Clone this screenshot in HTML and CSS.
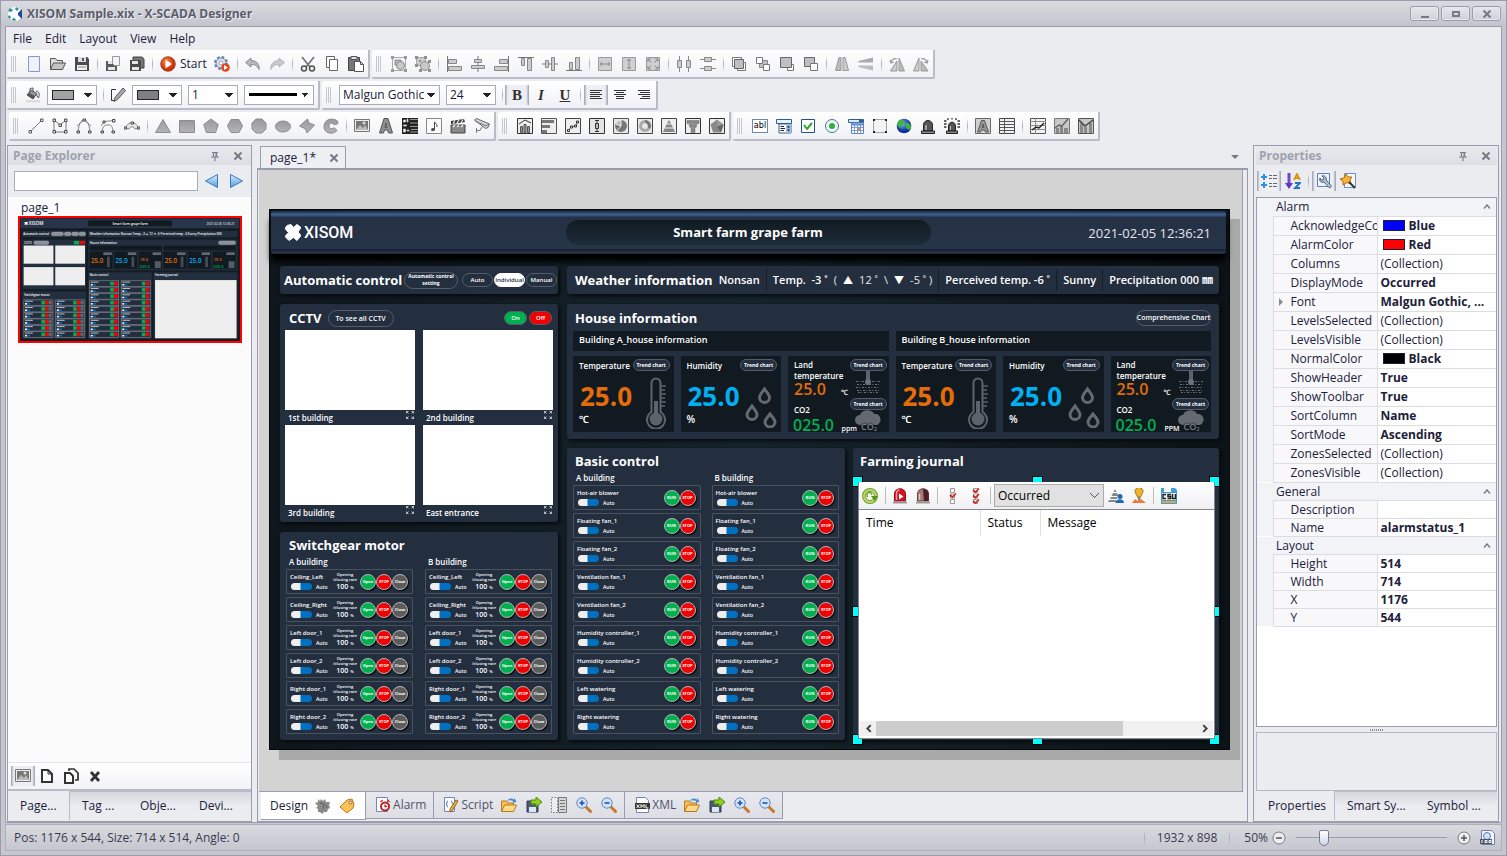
FILE: index.html
```html
<!DOCTYPE html>
<html lang="en">
<head>
<meta charset="utf-8">
<title>XISOM Sample.xix - X-SCADA Designer</title>
<link rel="stylesheet" href="styles.css">
</head>
<body>
<svg class="sprite" aria-hidden="true">
  <defs>
    <linearGradient id="gGrey" x1="0" y1="0" x2="0" y2="1"><stop offset="0" stop-color="#9a9a9d"/><stop offset="1" stop-color="#b4b4b7"/></linearGradient>
    <linearGradient id="gBlue" x1="0" y1="0" x2="0" y2="1"><stop offset="0" stop-color="#d8efff"/><stop offset="1" stop-color="#4f9fe0"/></linearGradient>
    <radialGradient id="gGlobe" cx=".4" cy=".35"><stop offset="0" stop-color="#7db4f5"/><stop offset="1" stop-color="#0b2f9c"/></radialGradient>
    <radialGradient id="gStart" cx=".4" cy=".35"><stop offset="0" stop-color="#ff8a50"/><stop offset="1" stop-color="#cf2f05"/></radialGradient>
  </defs>
  <symbol id="app" viewBox="0 0 16 16"><circle cx="8" cy="8" r="7" fill="#fff"/><path d="M3 2l3 2-2 2-3-1zM9 1l3 2-2 2-2-2zM2 9l2 2-1 2-2-2zM6 12l3 1-1 2-3-1z" fill="#2a8fa0"/><path d="M15 3v10l-4-4V7z" fill="#1c4a96"/></symbol>
  <symbol id="new" viewBox="0 0 16 16"><path d="M2.500 .5h11v15h-11z" fill="#eef3fd" stroke="#8799cf"/></symbol>
  <symbol id="open" viewBox="0 0 16 16"><path d="M.5 13.500v-11h5l1.500 2h5.500v3" fill="#ddd" stroke="#555"/><path d="M.5 13.500l3-6.500h12l-3 6.500z" fill="#c4c4c4" stroke="#555"/></symbol>
  <symbol id="save" viewBox="0 0 16 16"><path d="M1 1h12l2 2v12H1z" fill="#4b4b4b"/><path d="M4 1h8v5H4z" fill="#ddd"/><path d="M8 2h2v3H8z" fill="#555"/><path d="M3 9h10v5H3z" fill="#eee"/><path d="M4 11h8" stroke="#888"/></symbol>
  <symbol id="saveas" viewBox="0 0 16 16"><path d="M1 5h10l1 1v9H1z" fill="#5b5b5b"/><path d="M3 5h4v3H3zM3 11h7v3H3z" fill="#e6e6e6"/><path d="M7.500.5h7v9h-5l-2-2z" fill="#f4f4f4" stroke="#999"/></symbol>
  <symbol id="saveall" viewBox="0 0 16 16"><path d="M4 1h9l2 2v9H4z" fill="#777" stroke="#444"/><path d="M1 4h10l1 1v10H1z" fill="#4b4b4b"/><path d="M3 5h6v3H3zM3 11h7v3H3z" fill="#e6e6e6"/></symbol>
  <symbol id="start" viewBox="0 0 16 16"><circle cx="8" cy="8" r="7.300" fill="url(#gStart)" stroke="#8f3a18" stroke-width=".8"/><path d="M5.500 3.500l6.500 4.500-6.500 4.500z" fill="#fff"/></symbol>
  <symbol id="config" viewBox="0 0 16 16"><circle cx="7" cy="7" r="6" fill="none" stroke="#6a7fa3" stroke-width="2" stroke-dasharray="2.700 2"/><circle cx="7" cy="7" r="5" fill="#dbe4f0" stroke="#6a7fa3"/><circle cx="7" cy="7" r="2" fill="#fff" stroke="#8fa0bd"/><circle cx="11.500" cy="11.500" r="4.300" fill="#e2461a"/><path d="M10 9l4 2.500-4 2.500z" fill="#fff"/></symbol>
  <symbol id="undo" viewBox="0 0 16 16"><path d="M6 2L.5 6.500 6 11V8.500c4 0 6 1 8 5C15 8 11 4.500 6 4.500z" fill="#b9b9b9" stroke="#777" stroke-width=".8"/></symbol>
  <symbol id="redo" viewBox="0 0 16 16"><path d="M10 2l5.500 4.500L10 11V8.500c-4 0-6 1-8 5C1 8 5 4.500 10 4.500z" fill="#c9c9c9" stroke="#aaa" stroke-width=".8"/></symbol>
  <symbol id="cut" viewBox="0 0 16 16"><path d="M2 1l8 10M14 1L6 11" stroke="#777" stroke-width="1.800"/><circle cx="4" cy="12.500" r="2.500" fill="none" stroke="#555" stroke-width="1.500"/><circle cx="12" cy="12.500" r="2.500" fill="none" stroke="#555" stroke-width="1.500"/></symbol>
  <symbol id="copy" viewBox="0 0 16 16"><path d="M2.500.5h8v11h-8z" fill="#fff" stroke="#666"/><path d="M5.500 3.500h8v11h-8z" fill="#fff" stroke="#666"/></symbol>
  <symbol id="paste" viewBox="0 0 16 16"><path d="M.5 1.500h11v13H.5z" fill="#777" stroke="#444"/><path d="M3 .5h6v3H3z" fill="#ddd" stroke="#555"/><path d="M6.500 5.500h6l3 3v7h-9z" fill="#fff" stroke="#555"/><path d="M12.500 5.500v3h3" fill="none" stroke="#555"/></symbol>
  <symbol id="group" viewBox="0 0 16 16"><path d="M1.500 1.500h13v13h-13z" fill="none" stroke="#aaa"/><path d="M4 4h6v5H4z" fill="#bbb" stroke="#888"/><circle cx="9.500" cy="9.500" r="4" fill="#c8c8c8" stroke="#8a8a8a"/><path d="M0 0h3v3H0zM13 0h3v3h-3zM0 13h3v3H0zM13 13h3v3h-3z" fill="#999"/></symbol>
  <symbol id="ungroup" viewBox="0 0 16 16"><path d="M1.500 1.500h9v8h-9z" fill="#ccc" stroke="#aaa"/><circle cx="10" cy="10" r="4.500" fill="#c8c8c8" stroke="#8a8a8a"/><path d="M0 0h3v3H0zM9 0h3v3H9zM0 8h3v3H0zM4 4h2v2H4zM13 4h3v3h-3zM4 13h3v3H4zM13 13h3v3h-3z" fill="#909090"/></symbol>
  <symbol id="al" viewBox="0 0 16 16"><path d="M1.500 0v16" stroke="#777"/><path d="M2.500 3.500h8v4h-8zM2.500 10.500h13v4h-13z" fill="#ccc" stroke="#888"/></symbol>
  <symbol id="ac" viewBox="0 0 16 16"><path d="M8 0v16" stroke="#777"/><path d="M4.500 3.500h7v3h-7zM1.500 9.500h13v3h-13z" fill="#ccc" stroke="#888"/></symbol>
  <symbol id="ar" viewBox="0 0 16 16"><path d="M14.500 0v16" stroke="#777"/><path d="M5.500 3.500h8v4h-8zM.5 10.500h13v4H.5z" fill="#ccc" stroke="#888"/></symbol>
  <symbol id="at" viewBox="0 0 16 16"><path d="M0 1.500h16" stroke="#777"/><path d="M3.500 2.500h3v7h-3zM9.500 2.500h4v12h-4z" fill="#ccc" stroke="#888"/></symbol>
  <symbol id="am" viewBox="0 0 16 16"><path d="M0 8h16" stroke="#777"/><path d="M3.500 4.500h3v7h-3zM9.500 1.500h3v13h-3z" fill="#ccc" stroke="#888"/></symbol>
  <symbol id="ab" viewBox="0 0 16 16"><path d="M0 14.500h16" stroke="#777"/><path d="M3.500 6.500h3v7h-3zM9.500 1.500h4v12h-4z" fill="#ccc" stroke="#888"/></symbol>
  <symbol id="sw" viewBox="0 0 16 16"><path d="M1.500 1.500h13v13h-13z" fill="#d0d0d0" stroke="#999"/><path d="M3 8h10M5 6L3 8l2 2M11 6l2 2-2 2" fill="none" stroke="#888"/></symbol>
  <symbol id="sh" viewBox="0 0 16 16"><path d="M1.500 1.500h13v13h-13z" fill="#d0d0d0" stroke="#999"/><path d="M8 3v10M6 5l2-2 2 2M6 11l2 2 2-2" fill="none" stroke="#888"/></symbol>
  <symbol id="ss" viewBox="0 0 16 16"><path d="M1.500 1.500h13v13h-13z" fill="#d0d0d0" stroke="#999"/><path d="M3 6V3h3M10 3h3v3M13 10v3h-3M6 13H3v-3M3 3l3.500 3.500M13 3L9.500 6.500M13 13L9.500 9.500M3 13l3.500-3.500" fill="none" stroke="#888"/></symbol>
  <symbol id="dh" viewBox="0 0 16 16"><path d="M3.500 0v16M12.500 0v16" stroke="#888"/><path d="M1.500 4.500h4v7h-4zM10.500 4.500h4v7h-4z" fill="#ccc" stroke="#888"/></symbol>
  <symbol id="dv" viewBox="0 0 16 16"><path d="M0 3.500h16M0 12.500h16" stroke="#888"/><path d="M4.500 1.500h7v4h-7zM4.500 10.500h7v4h-7z" fill="#ccc" stroke="#888"/></symbol>
  <symbol id="z1" viewBox="0 0 16 16"><path d="M1.500 1.500h9v9h-9zM6.500 6.500h8v8h-8z" fill="#fff" stroke="#777"/><path d="M3.500 3.500h9v9h-9z" fill="#bfbfbf" stroke="#666"/></symbol>
  <symbol id="z2" viewBox="0 0 16 16"><path d="M4.500 4.500h8v7h-8z" fill="#bfbfbf" stroke="#888"/><path d="M1.500 1.500h6v6h-6zM8.500 8.500h6v6h-6z" fill="#fff" stroke="#777"/></symbol>
  <symbol id="z3" viewBox="0 0 16 16"><path d="M8.500 8.500h6v6h-6z" fill="#fff" stroke="#777"/><path d="M1.500 1.500h11v10h-11z" fill="#bfbfbf" stroke="#666"/></symbol>
  <symbol id="z4" viewBox="0 0 16 16"><path d="M1.500 1.500h10v9h-10z" fill="#bfbfbf" stroke="#666"/><path d="M7.500 7.500h7v7h-7z" fill="#fff" stroke="#777"/></symbol>
  <symbol id="fh" viewBox="0 0 16 16"><path d="M5 1.500h2v13H1.500z" fill="#bbb" stroke="#999"/><path d="M9 1.500h2l3.500 13H9z" fill="#ccc" stroke="#999"/></symbol>
  <symbol id="fv" viewBox="0 0 16 16"><path d="M15 1.500v5H.5V5z" fill="#aaa"/><path d="M15 14.500v-5H.5V11z" fill="#bbb"/></symbol>
  <symbol id="rl" viewBox="0 0 16 16"><path d="M8 5v10H1.500z" fill="#ccc" stroke="#999"/><path d="M10 2l5.500 13H10z" fill="#bbb" stroke="#999"/><path d="M2 7c0-3 3-5 6-4M1 4l1 3 3-1" fill="none" stroke="#999" stroke-width="1.300"/></symbol>
  <symbol id="rr" viewBox="0 0 16 16"><path d="M6 2v13H.5z" fill="#ccc" stroke="#999"/><path d="M8 5l7 10H8z" fill="#bbb" stroke="#999"/><path d="M14 7c0-3-3-5-6-4M15 4l-1 3-3-1" fill="none" stroke="#999" stroke-width="1.300"/></symbol>
  <symbol id="bucket" viewBox="0 0 16 16"><path d="M1 13h14v2.500H1z" fill="#ddd"/><path d="M6 3l6 3.500-4 5.500-6-4z" fill="#999" stroke="#555"/><path d="M2 8l6 4 2-3-6-3z" fill="#555"/><path d="M11 4c3 0 4 3 2.500 7L11 7M5 6V1.500l3-.5v4" fill="none" stroke="#555"/></symbol>
  <symbol id="pencil" viewBox="0 0 16 16"><path d="M6 2.500H1.500v11H4" fill="none" stroke="#333"/><path d="M13 1l2.500 2.500-8 9-3.500 2 1-4z" fill="#aaa" stroke="#555"/></symbol>
  <symbol id="left" viewBox="0 0 16 16"><path d="M2 3.500h12M2 5.500h10M2 7.500h12M2 9.500h10M2 11.500h12" stroke="#333"/></symbol>
  <symbol id="center" viewBox="0 0 16 16"><path d="M2 3.500h12M4 5.500h8M2 7.500h12M4 9.500h8M4 11.500h8" stroke="#333"/></symbol>
  <symbol id="right" viewBox="0 0 16 16"><path d="M2 3.500h12M4 5.500h10M2 7.500h12M6 9.500h8M4 11.500h10" stroke="#333"/></symbol>
  <symbol id="line" viewBox="0 0 16 16"><path d="M2 14L14 2" stroke="#777"/><path d="M1 12.500h2.500V15H1zM12.500 1H15v2.500h-2.500z" fill="#fff" stroke="#555"/></symbol>
  <symbol id="poly" viewBox="0 0 16 16"><path d="M2 2v12h12V2L8 7z" fill="none" stroke="#777"/><path d="M1 1h2.500v2.500H1zM12.500 1H15v2.500h-2.500zM7 6h2.500v2.500H7zM1 12.500h2.500V15H1zM12.500 12.500H15V15h-2.500z" fill="#fff" stroke="#444"/></symbol>
  <symbol id="curve" viewBox="0 0 16 16"><path d="M8 2L1 8M8 2l7 6M2 14C3 5 5 2 8 2s5 3 6 12" fill="none" stroke="#888"/><path d="M7 1h2.500v2H7zM1 13h2.500v2H1zM12.500 13H15v2h-2.500z" fill="#fff" stroke="#444"/></symbol>
  <symbol id="bez" viewBox="0 0 16 16"><path d="M4 3.500l10-1M4 4L1 8M2 14c1-7 3-7 6-7s4-1 5 7" fill="none" stroke="#888"/><path d="M3 3h2v2H3zM12.500 1.500H15V4h-2.500zM1 13h2.500v2H1zM12 13h2.500v2H12z" fill="#fff" stroke="#444"/></symbol>
  <symbol id="arc" viewBox="0 0 16 16"><path d="M1 10c4-7 10-7 14 0l-4 1c-1-3-5-3-6 0z" fill="#e8e8ea" stroke="#888"/><path d="M7 4h2.500v2H7zM0 9h2.500v2H0zM13.500 9H16v2h-2.500z" fill="#fff" stroke="#444"/></symbol>
  <symbol id="tri" viewBox="0 0 16 16"><path d="M8 1.500l7.500 13H.5z" fill="url(#gGrey)" stroke="#8c8c8f"/></symbol>
  <symbol id="rect" viewBox="0 0 16 16"><path d="M.5 2.500h15v12H.5z" fill="url(#gGrey)" stroke="#8c8c8f"/></symbol>
  <symbol id="penta" viewBox="0 0 16 16"><path d="M8 1l7.300 5.500-2.700 8H3.400L.7 6.500z" fill="url(#gGrey)" stroke="#8c8c8f"/></symbol>
  <symbol id="hexa" viewBox="0 0 16 16"><path d="M4 1.500h8l3.500 6.500-3.500 6.500H4L.5 8z" fill="url(#gGrey)" stroke="#8c8c8f"/></symbol>
  <symbol id="octa" viewBox="0 0 16 16"><path d="M5 1h6l4 4v6l-4 4H5l-4-4V5z" fill="url(#gGrey)" stroke="#8c8c8f"/></symbol>
  <symbol id="ell" viewBox="0 0 16 16"><ellipse cx="8" cy="8.500" rx="7.500" ry="5.500" fill="url(#gGrey)" stroke="#8c8c8f"/></symbol>
  <symbol id="free" viewBox="0 0 16 16"><path d="M.5 8L8.500 1l1.500 4 5.500 2-7.500 8-1.500-4z" fill="url(#gGrey)" stroke="#8c8c8f"/></symbol>
  <symbol id="cshape" viewBox="0 0 16 16"><path d="M15 3.500C10-1 1 1 1 8.500s9 8.500 13 4l-3-3c-1.500 2-5 1.500-5-1.500s3-3.500 5-1.500l3.500-.5z" fill="url(#gGrey)" stroke="#8c8c8f"/></symbol>
  <symbol id="image" viewBox="0 0 16 16"><path d="M.5 1.500h15v12H.5z" fill="#eee" stroke="#777"/><path d="M2 3h12v9H2z" fill="#777"/><path d="M2 12l4-5 3 3 2-3 3 5z" fill="#bbb"/><circle cx="10" cy="5" r="1.500" fill="#ddd"/></symbol>
  <symbol id="letter" viewBox="0 0 16 16"><path d="M6 .5h4L14.500 15h-4l-1-3h-3l-1 3h-4zM8 5L7 9.500h2z" fill="#909090" stroke="#555"/></symbol>
  <symbol id="barcode" viewBox="0 0 16 16"><path d="M0 0h16v16H0z" fill="#222"/><path d="M1.500 2h2v2h-2zM5 1h1v3H5zM1.500 7h3v1h-3zM1.500 11h2v3h-2zM5 12h2v1H5zM8 1.500h8M8 5h8M8 8.500h8M9 11.500h7M8 14h8" fill="#fff" stroke="#ccc" stroke-width=".7"/></symbol>
  <symbol id="note" viewBox="0 0 16 16"><path d="M.5.5h15v15H.5z" fill="#fafafa" stroke="#888"/><path d="M8.500 11V4c1 2 3 2 2.500 5" fill="none" stroke="#444"/><ellipse cx="7" cy="11.500" rx="2" ry="1.500" fill="#444"/></symbol>
  <symbol id="clap" viewBox="0 0 16 16"><path d="M1 7h14v8H1z" fill="#888" stroke="#444"/><path d="M1 3l13-2 1 3L1 6z" fill="#333"/><path d="M3 5.500l2-3M7 5l2-3M11 4.500l2-3M3 9l2-2M7 9l2-2M11 9l2-2" stroke="#eee" stroke-width="1.300"/></symbol>
  <symbol id="cctv" viewBox="0 0 16 16"><path d="M.5 2l2-1.500L15.500 6l-1.500 3.500-2.500 1z" fill="#d2d4da" stroke="#666"/><path d="M1 3l11 5 3-2M8 9l-2 3.500H2.500M2.500 10v5" fill="none" stroke="#777"/></symbol>
  <symbol id="c1" viewBox="0 0 16 16"><path d="M.5.5h15v15H.5z" fill="#eee" stroke="#333"/><path d="M3.500 8.500h2v6h-2zM7 6.500h2v8H7zM10.500 8.500h2v6h-2z" fill="#999" stroke="#555"/><path d="M2 6l6-4 6 3" fill="none" stroke="#333"/></symbol>
  <symbol id="c2" viewBox="0 0 16 16"><path d="M.5.5h15v15H.5z" fill="#eee" stroke="#555"/><path d="M1 2h12v3H1zM1 7h8v3H1zM1 12h5v3H1z" fill="#777"/></symbol>
  <symbol id="c3" viewBox="0 0 16 16"><path d="M.5.5h15v15H.5z" fill="#eee" stroke="#444"/><path d="M3.500 12l3-3 4-1 2-4" fill="none" stroke="#666"/><path d="M2.500 11.500h2v2h-2zM5.500 8h2v2h-2zM9.500 7h2v2h-2zM11.500 3h2v2h-2z" fill="#fff" stroke="#333"/></symbol>
  <symbol id="c4" viewBox="0 0 16 16"><path d="M.5.5h15v15H.5z" fill="#e4e4e4" stroke="#333"/><path d="M8 2v12M6 2.500h4M6 13.500h4" stroke="#333"/><path d="M6.500 5.500h3v5h-3z" fill="#bbb" stroke="#333"/></symbol>
  <symbol id="c5" viewBox="0 0 16 16"><path d="M.5.5h15v15H.5z" fill="#e8e8e8" stroke="#555"/><circle cx="8" cy="8" r="6" fill="#777"/><path d="M8 8V2a6 6 0 00-5.500 4zM8 8l-4 4.500" fill="#bbb" stroke="#eee"/></symbol>
  <symbol id="c6" viewBox="0 0 16 16"><path d="M.5.5h15v15H.5z" fill="#e8e8e8" stroke="#444"/><circle cx="8" cy="8" r="4.500" fill="none" stroke="#aaa" stroke-width="3"/><path d="M8 3.500a4.500 4.500 0 014 6.500" fill="none" stroke="#777" stroke-width="3"/></symbol>
  <symbol id="c7" viewBox="0 0 16 16"><path d="M.5.5h15v15H.5z" fill="#eee" stroke="#444"/><path d="M8 2l2 3.500H6zM5.500 6.500h5l1.500 3H4zM3.500 10.500h9l1.500 3.500H2z" fill="#888"/></symbol>
  <symbol id="c8" viewBox="0 0 16 16"><path d="M.5.5h15v15H.5z" fill="#eee" stroke="#333"/><path d="M2 2.500h12v3H2zM4 6.500h8l-1 3H5zM6 10.500h4v4H6z" fill="#888" stroke="#666" stroke-width=".5"/></symbol>
  <symbol id="c9" viewBox="0 0 16 16"><path d="M.5.5h15v15H.5z" fill="#eee" stroke="#333"/><path d="M8 1.500l6.500 5-2.500 8H4l-2.500-8z" fill="#888"/><path d="M8 1.500l6.500 5L8 8.500z" fill="#999"/><path d="M8 8.500l6.500-2-2.500 8z" fill="#666"/></symbol>
  <symbol id="combo" viewBox="0 0 16 16"><path d="M.5 1.500h15v4H.5z" fill="#e8f2fb" stroke="#2e5f94"/><path d="M3 6h12v9H3z" fill="#fff" stroke="#2e5f94"/><path d="M10 6h5v9h-5z" fill="#9fbce8"/><path d="M4.500 8.500H8M4.500 10.500H9M4.500 12.500H8" stroke="#222"/><path d="M11 9.500l1.500-2L14 9.500zM11 11.500l1.500 2 1.500-2z" fill="#222"/></symbol>
  <symbol id="check" viewBox="0 0 16 16"><path d="M1.500 1.500h13v13h-13z" fill="#fff" stroke="#1f517f"/><path d="M4 7l3 4 5-6" fill="none" stroke="#2da52d" stroke-width="2"/></symbol>
  <symbol id="radio" viewBox="0 0 16 16"><circle cx="8" cy="8" r="6.500" fill="#f4f8fb" stroke="#41749f"/><circle cx="8" cy="8" r="3" fill="#32b132"/></symbol>
  <symbol id="date" viewBox="0 0 16 16"><path d="M.5 1.500h15v3H.5z" fill="#dcebf8" stroke="#2e5f94"/><path d="M11 2h4v3h-4z" fill="#2e5f94"/><path d="M3.500 5h12v10.500h-12z" fill="#fff" stroke="#6485c4"/><path d="M4 6.500h11" stroke="#5f8ede" stroke-width="2"/><path d="M6.500 7v8M9.500 7v8M12.500 7v8M4 9.500h11M4 12.500h11" stroke="#7d9bd8"/><path d="M10 10h2v2h-2z" fill="#f08040"/></symbol>
  <symbol id="panelbox" viewBox="0 0 16 16"><path d="M1.500 1.500h13v13h-13z" fill="#f3f3f3" stroke="#555" stroke-dasharray="1 1"/><path d="M1 1h2v2H1zM13 1h2v2h-2zM1 13h2v2H1zM13 13h2v2h-2z" fill="#222"/></symbol>
  <symbol id="globe" viewBox="0 0 16 16"><circle cx="8" cy="8" r="7.300" fill="url(#gGlobe)"/><path d="M2 4c2-3 5-3 6-1s-1 3-2 5-1 2-3 1-2-3-1-5zM10 5c2-1 5 1 5 4s-3 3-4 2-2-4-1-6z" fill="#3fb43a"/></symbol>
  <symbol id="bell" viewBox="0 0 16 16"><path d="M3.500 13V7c0-6 9-6 9 0v6z" fill="#555" stroke="#222"/><path d="M6 12V7" stroke="#bbb" stroke-width="1.500"/><path d="M1.500 13h13v2.500h-13z" fill="#888" stroke="#222"/></symbol>
  <symbol id="bellring" viewBox="0 0 16 16"><path d="M4.500 13V8c0-5 7-5 7 0v5z" fill="#555" stroke="#222"/><path d="M6.500 12V8" stroke="#bbb"/><path d="M2.500 13h11v2.500h-11z" fill="#888" stroke="#222"/><path d="M4 0v2M8 0v1.500M12 0v2M0 3h2.500M0 6h2.500M0 9h2.500M13.500 3H16M13.500 6H16M13.500 9H16" stroke="#333" stroke-width="1.300"/></symbol>
  <symbol id="abox" viewBox="0 0 16 16"><path d="M.5.500h15v15H.5z" fill="#d0d0d0" stroke="#666"/><path d="M6.500 2.500h3l4 11.500h-3l-.7-2H6.200l-.7 2h-3zM8 6L7 9.500h2z" fill="#999" stroke="#555"/></symbol>
  <symbol id="grid" viewBox="0 0 16 16"><path d="M.5.500h15v15H.5z" fill="#f2f2f2" stroke="#444"/><path d="M0 3.500h16M0 6.500h16M0 9.500h16M0 12.500h16M5.500 0v16" stroke="#555"/></symbol>
  <symbol id="t1" viewBox="0 0 16 16"><path d="M.5.500h15v15H.5z" fill="#f2f2f2" stroke="#555"/><path d="M0 3.500h16M0 7.500h16M0 11.500h16M5.500 0v16" stroke="#888"/><path d="M2 12l4-3 3 1 5-5" fill="none" stroke="#222" stroke-width="1.500"/></symbol>
  <symbol id="t2" viewBox="0 0 16 16"><path d="M.5.500h15v15H.5z" fill="#c8c8c8" stroke="#777"/><path d="M2 10h3v5H2zM6 8h3v7H6zM10 10h4v5h-4z" fill="#888"/><path d="M1 10l4-3 3 1 6-7" fill="none" stroke="#666" stroke-width="1.500"/></symbol>
  <symbol id="t3" viewBox="0 0 16 16"><path d="M.5.500h15v15H.5z" fill="#c8c8c8" stroke="#555"/><path d="M2 5h3v10H2zM6 9h3v6H6zM11 5h3v10h-3z" fill="#8a8a8a"/><path d="M1 2l6 6 8-6" fill="none" stroke="#444" stroke-width="1.500"/></symbol>
  <symbol id="page" viewBox="0 0 16 16"><path d="M3 2h6l4 4v8H3z" fill="#fff" stroke="#333" stroke-width="2"/><path d="M9 2v4h4" fill="none" stroke="#333"/></symbol>
  <symbol id="pages" viewBox="0 0 16 16"><path d="M6 3V1h5l4 4v7h-3" fill="none" stroke="#333" stroke-width="1.700"/><path d="M2 5h5l3 3v7H2z" fill="#fff" stroke="#333" stroke-width="2"/></symbol>
  <symbol id="del" viewBox="0 0 16 16"><path d="M4 4l8 9M12 4l-8 9" stroke="#333" stroke-width="2.800"/></symbol>
  <symbol id="prev" viewBox="0 0 16 16"><path d="M13.500 1.500v13L1.500 8z" fill="url(#gBlue)" stroke="#3e78b8"/></symbol>
  <symbol id="next" viewBox="0 0 16 16"><path d="M2.500 1.500v13l12-6.500z" fill="url(#gBlue)" stroke="#3e78b8"/></symbol>
  <symbol id="pin" viewBox="0 0 10 10"><path d="M2 1.500h6M3.500 1v5M6.500 1v5M1 6h8M5 6v4" stroke="#7b7d8b" stroke-width="1.200"/><path d="M5.500 1h1.500v5H5.500z" fill="#7b7d8b"/></symbol>
  <symbol id="x" viewBox="0 0 10 10"><path d="M1.500 1.500l7 7M8.500 1.500l-7 7" stroke="#777986" stroke-width="2"/></symbol>
  <symbol id="cat" viewBox="0 0 16 16"><path d="M0 4h6M3 1v6M0 12h6M3 9v6" stroke="#2d8fe0" stroke-width="2"/><path d="M8 2.500h3M12 2.500h4M8 5.500h3M12 5.500h4M8 10.500h3M12 10.500h4M8 13.500h3M12 13.500h4" stroke="#666"/></symbol>
  <symbol id="az" viewBox="0 0 16 16"><path d="M4 0v12" stroke="#7048d0" stroke-width="3"/><path d="M0 10h8l-4 6z" fill="#6038c8"/><path d="M9 7l3-6 3 6M10 5h4" fill="none" stroke="#d99511" stroke-width="1.800"/><path d="M10 10h5l-5 5h5" fill="none" stroke="#1a75c8" stroke-width="1.800"/></symbol>
  <symbol id="wrench" viewBox="0 0 16 16"><path d="M1.500.500h12v13h-12z" fill="#eef4fc" stroke="#5a7fc0"/><path d="M4 5c-1 3 1 5 4 4l5 5.500c1 1 3-1 2-2L10 7c1-3-2-5-4-4l2 2-1 2H5z" fill="#b6c4d4" stroke="#4c5c70"/></symbol>
  <symbol id="events" viewBox="0 0 16 16"><path d="M4.500.500h11v14h-11z" fill="#f6f9fd" stroke="#6a90c8"/><path d="M6 1l2 3 4 0-2 3 1 4-4-1.500L3 12l0-4L0 6l4-1z" fill="#f9b23a" stroke="#b96a08"/><path d="M9 9l6 6" stroke="#333" stroke-width="2"/></symbol>
  <symbol id="gear" viewBox="0 0 16 16"><path d="M3 1l2 2 1-2 2 2 2-2 1 3 4 0-1 3 1 3-2 1-1 3-3 0-2 2-2-2H3l0-3-2-1 2-2-3-3 3-1z" fill="#8a8a8a"/><path d="M5 5l4 1-1 5M11 7l1 3" stroke="#5e5e5e" fill="none"/></symbol>
  <symbol id="tag" viewBox="0 0 16 16"><path d="M1 9l7-7 5-1 2 5-1 4-6 5z" fill="#ffc257" stroke="#b9771c"/><circle cx="11.500" cy="4.500" r="1.500" fill="#fff" stroke="#8a5a20"/></symbol>
  <symbol id="alarm" viewBox="0 0 16 16"><path d="M1.500.500h11v14h-11z" fill="#fff" stroke="#6d86b8"/><circle cx="10" cy="9.500" r="4" fill="#fff" stroke="#c02222" stroke-width="2"/><path d="M10 7.500v2h2M5.500 5l2-2M14.500 5l-2-2" stroke="#c02222" stroke-width="1.300" fill="none"/></symbol>
  <symbol id="script" viewBox="0 0 16 16"><path d="M1.500.500h10v14h-10z" fill="#fff" stroke="#6d86b8"/><path d="M5 4C3 4 5 7 3 7c2 0 0 3 2 3M8 4c2 0 0 3 2 3" fill="none" stroke="#3b6cc0"/><path d="M15 4l-6 10-2 1 0-3 6-9z" fill="#f1b03a" stroke="#8a6420"/></symbol>
  <symbol id="xml" viewBox="0 0 16 16"><path d="M2.500.500h9l3 3v12h-12z" fill="#fff" stroke="#6d86b8"/><path d="M1 6h15v6H1z" fill="#333"/><path d="M2.500 7.500l3 3.500M5.500 7.500l-3 3.500M7 11V7.500l1.500 2 1.500-2V11M12 7.500V11h2.500" fill="none" stroke="#fff"/></symbol>
  <symbol id="fopen" viewBox="0 0 16 16"><path d="M.5 14.500V4h5l1 2h6v3" fill="#f6c25a" stroke="#b87a1c"/><path d="M.5 14.500l3-6.500h12l-3 6.500z" fill="#ffd98a" stroke="#b87a1c"/><path d="M6 4c2-3 5-3 7-1V1l2.500 3.500L12 6V4c-2-1-4-1-6 0z" fill="#3d8be0"/></symbol>
  <symbol id="export" viewBox="0 0 16 16"><path d="M1 4h11v11H1z" fill="#4a5c78" stroke="#2c3a52"/><path d="M3 10h7v5H3z" fill="#dfe6ef"/><path d="M5 3h5V0l6 5-6 5V7H5z" fill="#8fd021" stroke="#4b8a0a"/></symbol>
  <symbol id="outline" viewBox="0 0 16 16"><path d="M.5.500h6v15h-6z" fill="#eee" stroke="#777" stroke-dasharray="1.500 1.500"/><path d="M7.500.500h8v15h-8z" fill="#d5d5d5" stroke="#777"/><path d="M9 3.500h5M9 6.500h5M9 9.500h5M9 12.500h5" stroke="#777"/></symbol>
  <symbol id="zin" viewBox="0 0 16 16"><path d="M9.500 9.500l5 5" stroke="#c8782c" stroke-width="3" stroke-linecap="round"/><circle cx="6" cy="6" r="5.200" fill="#cfe4fb" stroke="#6a87b4"/><path d="M3.500 6h5M6 3.500v5" stroke="#1c4fb8" stroke-width="1.600"/></symbol>
  <symbol id="zout" viewBox="0 0 16 16"><path d="M9.500 9.500l5 5" stroke="#c8782c" stroke-width="3" stroke-linecap="round"/><circle cx="6" cy="6" r="5.200" fill="#cfe4fb" stroke="#6a87b4"/><path d="M3.500 6h5" stroke="#1c4fb8" stroke-width="1.600"/></symbol>
  <symbol id="expand" viewBox="0 0 8 8"><path d="M.5 2.500v-2h2M5.500.500h2v2M7.500 5.500v2h-2M2.500 7.500h-2v-2M.5.500l2 2M7.500.500l-2 2M7.500 7.500l-2-2M.5 7.500l2-2" fill="none" stroke="#d5dae2" stroke-width=".8"/></symbol>
  <symbol id="thermo" viewBox="0 0 20 52"><path d="M5.500 35V6a4.500 4.500 0 019 0v29a9 9 0 11-9 0z" fill="none" stroke="#5b646c" stroke-width="2"/><circle cx="10" cy="42" r="6.500" fill="#5b646c"/><path d="M10 42V24" stroke="#5b646c" stroke-width="4"/><path d="M15 9h5M15 13h4M15 17h5M15 21h4M15 25h5M15 29h4" stroke="#5b646c" stroke-width="1.600"/></symbol>
  <symbol id="drops" viewBox="0 0 32 42"><g fill="none" stroke="#646a70" stroke-width="3"><path d="M19.500 3c-3 4-5 6-5 8.500a5 5 0 0010 0c0-2.500-2-4.500-5-8.500zM7 20c-3 4-5 6-5 8.500a5 5 0 0010 0c0-2.500-2-4.500-5-8.500zM25 28c-3 4-5 5.500-5 8a5 5 0 0010 0c0-2.500-2-4-5-8z"/></g></symbol>
  <symbol id="soil" viewBox="0 0 24 22"><path d="M12 0v9" stroke="#5b646c" stroke-width="4"/><circle cx="12" cy="11" r="3" fill="#6b747c"/><path d="M0 10.500h8M16 10.500h8M1 13.500h22M0 16.500h24M1 19.500h22M2 21.500h20" stroke="#68717a" stroke-dasharray="2 1.300 1 1.700"/></symbol>
  <symbol id="cloud" viewBox="0 0 26 16"><path d="M5 15a5 5 0 010-10C7-1 17-1 19 4c7-1 9 8 3 11z" fill="#646a70"/></symbol>
  <symbol id="refresh" viewBox="0 0 16 16"><circle cx="8" cy="8" r="6" fill="none" stroke="#6f9e22" stroke-width="4"/><circle cx="8" cy="8" r="6" fill="none" stroke="#b8d977" stroke-width="2"/><path d="M6 9a2.500 2.500 0 114-2" fill="none" stroke="#6f9e22" stroke-width="1.300"/><path d="M9 8h7l-3.500 5z" fill="#5d8e14"/></symbol>
  <symbol id="siren" viewBox="0 0 16 16"><path d="M2.500 13V6c0-7 11-7 11 0v7z" fill="#d31224" stroke="#9c0c18"/><path d="M4.500 12V6c0-3 2-4 3-4" fill="none" stroke="#f6a0a8" stroke-width="1.500"/><path d="M7 5.500l4.500 3-4.500 3z" fill="#fff"/><path d="M1 14.500h14" stroke="#999" stroke-width="2"/></symbol>
  <symbol id="siren2" viewBox="0 0 16 16"><path d="M2.500 13V6c0-7 11-7 11 0v7z" fill="#a87878" stroke="#6b3c3c"/><path d="M8 1c5 0 5.500 3 5.500 5v7H9z" fill="#4a2020"/><path d="M4.500 12V6" stroke="#e2c6c6" stroke-width="1.500"/><path d="M1 14.500h14" stroke="#999" stroke-width="2"/></symbol>
  <symbol id="ack" viewBox="0 0 16 16"><path d="M5.500.500h4v4h-4zM5.500 6h4v4h-4zM5.500 11.500h4v4h-4z" fill="#fff" stroke="#999"/><path d="M5 7l2.500 2L11 5.500" fill="none" stroke="#d42a1c" stroke-width="1.700"/></symbol>
  <symbol id="ackall" viewBox="0 0 16 16"><path d="M5.500.500h4v4h-4zM5.500 6h4v4h-4zM5.500 11.500h4v4h-4z" fill="#fff" stroke="#999"/><path d="M5 2l2.500 2L11 .5M5 7.500l2.500 2L11 6M5 13l2.500 2 3.500-3.500" fill="none" stroke="#d42a1c" stroke-width="1.700"/></symbol>
  <symbol id="level" viewBox="0 0 16 16"><path d="M7 1l1.500 3h-3zM5 5h4l1.500 3H3.500zM3 9h6v2H2zM1 12h7v2H0z" fill="#888"/><circle cx="12" cy="8.500" r="2.500" fill="#1d6bb8"/><path d="M7.500 15c0-5 8.500-5 8.500 0z" fill="#1d6bb8"/></symbol>
  <symbol id="zone" viewBox="0 0 16 16"><path d="M1 15l3-4 3 2 3-2 5 4z" fill="#f07838"/><path d="M8 12L5 6a4 4 0 116 0z" fill="#f2b32a" stroke="#8a6a2a" stroke-width=".8"/><path d="M8 8v5" stroke="#777"/></symbol>
  <symbol id="csv" viewBox="0 0 16 16"><path d="M0 0h14l2 2v14H0z" fill="#3aa0d8"/><path d="M3 0h7v4H3z" fill="#fff"/><path d="M1 5h14v7H1z" fill="#eee"/><path d="M1 13h14v2H1z" fill="#f0a030"/><path d="M5 6.500H2v4h3M10 6.500H7v2h2.500v2H6.500M11.500 6v4.500h3V6" fill="none" stroke="#222" stroke-width="1.500"/></symbol>
  <symbol id="mark" viewBox="0 0 16 16"><path d="M2 1l4-1 2.500 3L12 0l4 3-3 4.500 3 3.500-4 5-3.500-3L4 16l-4-4 3.500-4L0 4z" fill="#fff" stroke="#fff" stroke-linejoin="round"/></symbol>
  <symbol id="zminus" viewBox="0 0 14 14"><circle cx="7" cy="7" r="6" fill="#eee" stroke="#777986"/><path d="M4 7h6" stroke="#555" stroke-width="1.500"/></symbol>
  <symbol id="zplus" viewBox="0 0 14 14"><circle cx="7" cy="7" r="6" fill="#eee" stroke="#777986"/><path d="M4 7h6M7 4v6" stroke="#555" stroke-width="1.500"/></symbol>
  <symbol id="zreset" viewBox="0 0 16 16"><path d="M1.500.500h10l3 3v11h-13z" fill="#f4f7fc" stroke="#6d7fa8"/><circle cx="7" cy="6" r="3.500" fill="#d0e2f8" stroke="#5a78b0"/><path d="M0 9h12v5H0z" fill="#4a5670"/><path d="M2 10v3M5 10.500h2v2H5zM9 10.500h2v2H9z" stroke="#fff" fill="none"/></symbol>
  <symbol id="caret" viewBox="0 0 8 5"><path d="M1 4.500L4 1l3 3.500" fill="none" stroke="#777986" stroke-width="1.400"/></symbol>
</svg>

<header class="titlebar">
  <svg class="ico"><use href="#app"/></svg>
  <h1>XISOM Sample.xix - X-SCADA Designer</h1>
  <div class="winbtns">
    <button aria-label="Minimize"><svg viewBox="0 0 12 10"><path d="M2 8h8" stroke="#777986" stroke-width="2"/></svg></button>
    <button aria-label="Maximize"><svg viewBox="0 0 12 10"><path d="M3 3h6v4H3z" fill="none" stroke="#777986" stroke-width="2"/></svg></button>
    <button aria-label="Close"><svg viewBox="0 0 12 10"><path d="M2.500 1.500l7 7M9.500 1.500l-7 7" stroke="#777986" stroke-width="2"/></svg></button>
  </div>
</header>

<div class="frame">
  <nav class="menu">
    <button>File</button><button>Edit</button><button>Layout</button><button>View</button><button>Help</button>
  </nav>
  <div class="bars">
    <div class="barrow">
      <div class="bar" data-tools="new open save | saveas saveall | start:Start config | undo redo | cut copy paste"></div>
      <div class="bar" data-tools="group ungroup | al ac ar at am ab | sw sh ss | dh dv | z1 z2 z3 z4 | fh fv | rl rr"></div>
    </div>
    <div class="barrow">
      <div class="bar fields">
        <button class="tool" aria-label="Fill"><svg class="ico"><use href="#bucket"/></svg></button>
        <button class="drop w50" aria-label="Fill color"><span class="chip"></span></button>
        <i class="sep wide"></i>
        <button class="tool" aria-label="Stroke"><svg class="ico"><use href="#pencil"/></svg></button>
        <button class="drop w50" aria-label="Stroke color"><span class="chip dark"></span></button>
        <select class="drop w50 gap" aria-label="Stroke width"><option>1</option></select>
        <button class="drop w70 gap" aria-label="Stroke style"><span class="stroke"></span></button>
      </div>
      <div class="bar fields fonts">
        <select class="drop w101" aria-label="Font"><option>Malgun Gothic</option></select>
        <select class="drop w50 gap" aria-label="Font size"><option>24</option></select>
        <i class="sep wide"></i>
        <button class="tool letter pressed"><b>B</b></button>
        <button class="tool letter"><em>I</em></button>
        <button class="tool letter"><u>U</u></button>
        <i class="sep"></i>
        <button class="tool pressed" aria-label="Align left"><svg class="ico"><use href="#left"/></svg></button>
        <button class="tool" aria-label="Align center"><svg class="ico"><use href="#center"/></svg></button>
        <button class="tool" aria-label="Align right"><svg class="ico"><use href="#right"/></svg></button>
      </div>
    </div>
    <div class="barrow third">
      <div class="bar" data-tools="line poly curve bez arc | tri rect penta hexa octa ell free cshape | image letter barcode note clap cctv"></div>
      <div class="bar" data-tools="c1 c2 c3 c4 c5 c6 c7 c8 c9"></div>
      <div class="bar" data-tools="abl combo check radio date panelbox globe bell bellring | abox grid | t1 t2 t3"></div>
    </div>
  </div>

  <main class="work">
    <aside class="dock explorer">
      <header class="dock-head"><h2>Page Explorer</h2><button aria-label="Pin"><svg><use href="#pin"/></svg></button><button aria-label="Close"><svg><use href="#x"/></svg></button></header>
      <div class="search">
        <input type="text" aria-label="Find page">
        <button aria-label="Previous"><svg class="ico"><use href="#prev"/></svg></button>
        <button aria-label="Next"><svg class="ico"><use href="#next"/></svg></button>
      </div>
      <div class="pages">
        <span>page_1</span>
        <svg class="thumb" viewBox="0 0 961 541" preserveAspectRatio="none" id="thumb"></svg>
      </div>
      <div class="pagetools" data-tools="image* page pages del"></div>
      <div class="docktabs four"><button class="on">Page...</button><button>Tag ...</button><button>Obje...</button><button>Devi...</button></div>
    </aside>

    <section class="editor">
      <div class="doctabs"><button class="doctab">page_1*<svg><use href="#x"/></svg></button><i class="down"></i></div>
      <div class="docbody">
        <div class="canvas">
          <div class="dash">
            <header class="dash-head">
              <div class="logo"><svg><use href="#mark"/></svg><span>XISOM</span></div>
              <div class="dash-title">Smart farm grape farm</div>
              <time>2021-02-05 12:36:21</time>
            </header>
            <div class="dash-body">
              <div class="col">
                <section class="panel auto">
                  <h3>Automatic control</h3>
                  <button class="pill setting">Automatic control<br>setting</button>
                  <button class="pill mode">Auto</button><button class="pill mode sel">Individual</button><button class="pill mode">Manual</button>
                </section>
                <section class="panel cctv">
                  <div class="ctitle"><h3>CCTV</h3><button class="pill all">To see all CCTV</button><button class="pill onoff on">On</button><button class="pill onoff off">Off</button></div>
                  <div class="videos">
                    <figure><div class="video"></div><figcaption>1st building<svg><use href="#expand"/></svg></figcaption></figure>
                    <figure><div class="video"></div><figcaption>2nd building<svg><use href="#expand"/></svg></figcaption></figure>
                    <figure><div class="video"></div><figcaption>3rd building<svg><use href="#expand"/></svg></figcaption></figure>
                    <figure><div class="video"></div><figcaption>East entrance<svg><use href="#expand"/></svg></figcaption></figure>
                  </div>
                </section>
                <section class="panel units">
                  <h3>Switchgear motor</h3>
                  <div class="unitcols">
                    <div><h4>A building</h4><div class="unitlist" data-rows="gear"></div></div>
                    <div><h4>B building</h4><div class="unitlist" data-rows="gear"></div></div>
                  </div>
                </section>
              </div>
              <div class="col">
                <section class="panel weather">
                  <h3>Weather information</h3>
                  <b>Nonsan</b><i></i><b class="temp">Temp. &nbsp;-3 ˚</b><span>(</span><span class="arrow">▲</span><span class="val">12 ˚</span><span>\</span><span class="arrow">▼</span><span class="val">-5 ˚ )</span><i></i><b>Perceived temp. -6 ˚</b><i></i><b>Sunny</b><i></i><b>Precipitation 000 ㎜</b>
                </section>
                <section class="panel house">
                  <div class="htitle"><h3>House information</h3><button class="pill comp">Comprehensive Chart</button></div>
                  <div class="houses">
                    <div class="building" data-name="Building A_house information" data-ppm="ppm"></div>
                    <div class="building" data-name="Building B_house information" data-ppm="PPM"></div>
                  </div>
                </section>
                <div class="lower">
                  <section class="panel units basic">
                    <h3>Basic control</h3>
                    <div class="unitcols">
                      <div><h4>A building</h4><div class="unitlist" data-rows="basic"></div></div>
                      <div><h4>B building</h4><div class="unitlist" data-rows="basic"></div></div>
                    </div>
                  </section>
                  <section class="panel journal">
                    <h3>Farming journal</h3>
                    <div class="selection">
                      <i class="h tl"></i><i class="h tc"></i><i class="h tr"></i><i class="h ml"></i><i class="h mr"></i><i class="h bl"></i><i class="h bc"></i><i class="h br"></i>
                      <div class="alarms">
                        <div class="alarmbar">
                          <button aria-label="Refresh"><svg class="ico"><use href="#refresh"/></svg></button><i></i>
                          <button aria-label="Start alarm"><svg class="ico"><use href="#siren"/></svg></button>
                          <button aria-label="Stop alarm"><svg class="ico"><use href="#siren2"/></svg></button><i></i>
                          <button aria-label="Acknowledge"><svg class="ico"><use href="#ack"/></svg></button>
                          <button aria-label="Acknowledge all"><svg class="ico"><use href="#ackall"/></svg></button><i></i>
                          <select aria-label="Display mode"><option>Occurred</option></select>
                          <button aria-label="Levels"><svg class="ico"><use href="#level"/></svg></button>
                          <button aria-label="Zones"><svg class="ico"><use href="#zone"/></svg></button><i></i>
                          <button aria-label="Export CSV"><svg class="ico"><use href="#csv"/></svg></button>
                        </div>
                        <table class="alarmlist"><thead><tr><th class="c1">Time</th><th class="c2">Status</th><th>Message</th></tr></thead></table>
                        <div class="hscroll"><button aria-label="Scroll left"><svg viewBox="0 0 8 8"><path d="M6 1L3 4l3 3" fill="none" stroke="#444" stroke-width="1.800"/></svg></button><div class="track"><i></i></div><button aria-label="Scroll right"><svg viewBox="0 0 8 8"><path d="M2 1l3 3-3 3" fill="none" stroke="#444" stroke-width="1.800"/></svg></button></div>
                      </div>
                    </div>
                  </section>
                </div>
              </div>
            </div>
          </div>
        </div>
        <div class="viewtabs">
          <div class="vt on"><span>Design</span><svg class="ico"><use href="#gear"/></svg><svg class="ico"><use href="#tag"/></svg></div>
          <div class="vt"><svg class="ico"><use href="#alarm"/></svg><span>Alarm</span></div>
          <div class="vt"><svg class="ico"><use href="#script"/></svg><span>Script</span><svg class="ico"><use href="#fopen"/></svg><svg class="ico"><use href="#export"/></svg><svg class="ico"><use href="#outline"/></svg><svg class="ico"><use href="#zin"/></svg><svg class="ico"><use href="#zout"/></svg></div>
          <div class="vt"><svg class="ico"><use href="#xml"/></svg><span>XML</span><svg class="ico"><use href="#fopen"/></svg><svg class="ico"><use href="#export"/></svg><svg class="ico"><use href="#zin"/></svg><svg class="ico"><use href="#zout"/></svg></div>
        </div>
      </div>
    </section>

    <aside class="dock props">
      <header class="dock-head"><h2>Properties</h2><button aria-label="Pin"><svg><use href="#pin"/></svg></button><button aria-label="Close"><svg><use href="#x"/></svg></button></header>
      <div class="proptools" data-tools="cat* az | wrench* events"></div>
      <div class="propgrid">
        <table>
          <colgroup><col class="gutter"><col class="name"><col></colgroup>
          <tbody id="props"></tbody>
        </table>
      </div>
      <div class="splitter"><i></i></div>
      <div class="desc"></div>
      <div class="docktabs three"><button class="on">Properties</button><button>Smart Sy...</button><button>Symbol ...</button></div>
    </aside>
  </main>
</div>

<footer class="status">
  <span>Pos: 1176 x 544, Size: 714 x 514, Angle: 0</span>
  <i class="sep"></i><span>1932 x 898</span><i class="sep"></i>
  <label for="zoom">50%</label>
  <button aria-label="Zoom out"><svg><use href="#zminus"/></svg></button>
  <input type="range" id="zoom" min="0" max="100" value="16">
  <button aria-label="Zoom in"><svg><use href="#zplus"/></svg></button>
  <button class="reset" aria-label="Reset zoom"><svg class="ico"><use href="#zreset"/></svg></button>
</footer>
<script src="app.js"></script>
</body>
</html>
```
FILE: styles.css
```css
* { box-sizing: border-box; }
body {
  margin: 0; height: 100vh; overflow: hidden; display: flex; flex-direction: column;
  padding: 0 4px 4px; background: #c6c7ce; border: 1px solid #9a9cad;
  font: 12px/18px "Open Sans", "Noto Sans", sans-serif; color: #20203a;
}
button, select, input { font: inherit; color: inherit; }
button { padding: 0; border: 0; background: none; display: inline-flex; align-items: center; justify-content: center; }
h1, h2, h3, h4, figure { margin: 0; }
.sprite { position: absolute; width: 0; height: 0; }
.ico { width: 16px; height: 16px; flex: none; display: block; }
.abl { width: 16px; height: 14px; border: 1px solid #6a8ab0; background: #fff; color: #000; font: 9px/11px "DejaVu Sans Condensed", sans-serif; text-align: center; }

/* title bar */
.titlebar { height: 25px; margin: 0 -4px; padding: 0 5px 0 6px; display: flex; align-items: center; gap: 4px; background: linear-gradient(#dadbe1, #c4c5cc); }
.titlebar h1 { flex: 1; font-size: 12px; font-weight: 700; color: #5b5c6e; text-shadow: 1px 1px #eee; }
.winbtns { display: flex; gap: 2px; }
.winbtns button { width: 29px; height: 15px; border: 1px solid #9a9cad; border-radius: 3px; background: linear-gradient(#e6e7ec, #cfd0d7); box-shadow: inset 0 0 0 1px #e8e9ee; }
.winbtns svg { width: 12px; height: 10px; }

.frame { flex: 1; min-height: 0; display: flex; flex-direction: column; border: 1px solid #9a9cad; background: #ebecf0; }
.menu { height: 23px; padding-left: 7px; display: flex; gap: 13px; }

/* toolbars */
.bars { display: flex; flex-direction: column; gap: 2px; padding-left: 1px; }
.barrow { display: flex; gap: 2px; }
.barrow.third { padding-left: 2px; }
.bar { position: relative; height: 29px; padding: 0 0 0 15px; display: flex; align-items: center; background: linear-gradient(#fff, #f0f1f5); border-right: 2px solid #b9bbc8; border-bottom: 2px solid #b9bbc8; border-radius: 3px 0 2px 2px; }
.bar::before { content: ""; position: absolute; left: 4px; top: 6px; width: 6px; height: 16px; background: repeating-linear-gradient(90deg, #c5c6d0 0 1px, transparent 1px 2px); }
.tool { height: 24px; min-width: 24px; flex: none; gap: 4px; }
.tool.labeled { padding: 0 3px 0 4px; }
.sep { width: 1px; height: 16px; margin: 0 3px; flex: none; background: linear-gradient(transparent, #a9abb8, transparent); }
.pressed { background: linear-gradient(90deg, #9a9cae, #eeeff4 12%, #eeeff4 88%, #9a9cae); height: 20px; }
.fields { padding: 0 4px 0 14px; }
.fields .tool + .drop { margin-left: 2px; }
.fields .sep.wide { margin: 0 2px 0 6px; }
.drop { appearance: none; height: 20px; padding: 0 0 0 4px; border: 1px solid #a9abb9; background-color: #fff; background-image: linear-gradient(45deg, transparent 50%, #222 50%), linear-gradient(-45deg, transparent 50%, #222 50%); background-size: 4px 4px; background-position: right 8px center, right 4px center; background-repeat: no-repeat; border-radius: 0; justify-content: flex-start; }
select.drop { padding-left: 3px; }
.w50 { width: 50px; } .w70 { width: 70px; } .w101 { width: 101px; }
.gap { margin-left: 6px; }
.fonts { padding-left: 17px; padding-right: 0; }
.chip { width: 22px; height: 10px; background: #a3a3a3; border: 1px solid #22223a; }
.chip.dark { background: #7f7f7f; }
.stroke { width: 48px; height: 3px; background: #000; }
.letter { font: 15px/20px "Liberation Serif", serif; color: #333; }
.letter b, .letter em, .letter u { font-weight: 700; }

/* docks */
.work { flex: 1; min-height: 0; display: flex; padding: 4px 2px 0 1px; }
.dock { flex: none; display: flex; flex-direction: column; border: 1px solid #9a9cad; background: #ebecf0; }
.explorer { width: 245px; }
.props { width: 246px; margin-left: 5px; padding: 0 1px 0 2px; }
.dock-head { height: 19px; padding: 0 8px 0 5px; display: flex; align-items: center; gap: 13px; background: linear-gradient(#e9eaee, #dddee4); }
.props .dock-head { padding: 0 6px 0 3px; }
.dock-head h2 { flex: 1; font-size: 12px; line-height: 18px; color: #9fa1ae; }
.dock-head svg { width: 10px; height: 10px; }
.search { height: 32px; padding: 0 7px 0 6px; display: flex; align-items: center; gap: 8px; }
.search input { flex: 1; min-width: 0; height: 20px; border: 1px solid #a9abb9; background: #fff; }
.search button:first-of-type { margin-left: -2px; }
.pages { flex: 1; min-height: 0; padding: 2px 9px 0 10px; background: #fbfbfb; display: flex; flex-direction: column; }
.pages span { padding-left: 3px; height: 17px; }
.thumb { width: 100%; height: 127px; border: 2px solid #f00; background: #141d24; }
.pagetools { height: 29px; padding-left: 3px; display: flex; align-items: center; background: linear-gradient(#fff, #f2f3f7); border-bottom: 2px solid #b9bbc8; border-top: 1px solid #e2e3e8; }
.docktabs { height: 30px; display: grid; align-items: stretch; padding-bottom: 1px; }
.docktabs.four { grid-template-columns: 62px 58px 59px 1fr; }
.docktabs.three { grid-template-columns: 79px 80px 1fr; }
.docktabs button { justify-content: flex-start; padding-left: 12px; background: linear-gradient(#d6d7dd, #ebecf0 50%); }
.docktabs button.on { background: none; border-right: 1px solid #b9bbc8; }
.docktabs button:not(.on) { border-top: 1px solid #b9bbc8; }

/* editor */
.editor { flex: 1; min-width: 0; margin-left: 5px; display: flex; flex-direction: column; }
.doctabs { height: 23px; padding: 1px 9px 0 3px; display: flex; align-items: center; justify-content: space-between; }
.doctab { align-self: stretch; gap: 13px; padding: 0 6px 0 9px; background: #eeeff3; border: 1px solid #9a9cad; border-bottom: 0; }
.doctab svg { width: 10px; height: 10px; }
.down { border: 4px solid transparent; border-top-color: #777986; border-bottom: 0; }
.docbody { flex: 1; min-height: 0; display: flex; flex-direction: column; padding: 0 4px 0 1px; border: 1px solid #9a9cad; border-top-width: 2px; background: #ebecf0; }
.canvas { flex: 1; min-height: 0; padding: 39px 12px 0 10px; background: #d3d3d3; border-right: 1px solid #9a9cad; border-bottom: 1px solid #9a9cad; overflow: hidden; }
.viewtabs { height: 29px; padding-left: 2px; display: flex; align-items: flex-start; }
.vt { height: 27px; padding: 0 7px 0 9px; display: flex; align-items: center; gap: 9px; color: #50526a; border-right: 1px solid #9a9cad; border-bottom: 1px solid #9a9cad; background: linear-gradient(#e8e9ee, #dddee4); }
.vt.on { height: 28px; gap: 8px; color: #20203a; background: #fff; padding: 0 10px 0 9px; }
.vt .ico + span { margin-left: -7px; }
.vt span + .ico { margin-left: -1px; }

/* artboard */
.dash { box-shadow: 10px 10px #a9a9a9; background: linear-gradient(90deg, #0f171c, #16242c 50%, #0d1418); border: 1px solid #05090c; color: #fff; font-family: "Open Sans", "Noto Sans", "Noto Sans CJK KR", sans-serif; padding: 1px 10px 9px; }
.dash h3 { font-size: 13px; line-height: 18px; font-weight: 700; white-space: nowrap; }
.dash-head { height: 43px; margin: 0 -7px 12px -9px; padding: 0 15px 0 14px; display: grid; grid-template-columns: 1fr 365px 1fr; align-items: center; border-radius: 3px; background: linear-gradient(#1a2a3e, #3f5f8f 8%, #304a70 12%, #243043 14%, #283448 88%, #141c28 90%, #2b384c 96%, #1a2433); box-shadow: 0 8px 6px #000; }
.logo { display: flex; align-items: center; gap: 3px; font: 500 16px/18px "Roboto", sans-serif; }
.logo svg { width: 16px; height: 17px; }
.dash-title { height: 25px; border-radius: 13px; background: linear-gradient(#111a21, #1e2d3a); text-align: center; font-size: 13px; line-height: 24px; font-weight: 700; }
.dash-head time { text-align: right; font-size: 13px; color: #e4e6ea; }
.dash-body { display: grid; grid-template-columns: minmax(0, 278fr) minmax(0, 652fr); gap: 9px; }
.col { display: flex; flex-direction: column; gap: 10px; min-width: 0; }
.panel { border-radius: 3px; background: #232e3f; box-shadow: 2px 2px 4px #05090c; }
.pill { height: 14px; border: 1px solid #555d6a; border-radius: 10px; font-size: 7px; line-height: 7px; font-weight: 600; color: #fff; white-space: nowrap; background: #232e3f; }
.auto { height: 28px; padding: 0 1px 0 4px; display: flex; align-items: center; gap: 1px; }
.auto h3 { flex: 1; }
.pill.setting { width: 54px; height: 17px; font-size: 5px; font-weight: 700; margin-right: 3px; }
.pill.mode { width: 31px; font-size: 6px; }
.pill.sel { background: #fff; color: #232e3f; border-color: #fff; }
.ctitle { height: 26px; padding: 2px 6px 0 9px; display: flex; align-items: center; gap: 2px; }
.pill.all { width: 66px; height: 17px; margin: 0 auto 0 4px; }
.pill.onoff { width: 23px; font-size: 6px; }
.pill.onoff.on { background: #00b050; } .pill.onoff.off { background: #f00000; }
.videos { padding: 0 5px 2px 5px; display: grid; grid-template-columns: 1fr 1fr; column-gap: 8px; }
.video { height: 80px; background: #fff; }
.videos figcaption { height: 15px; padding: 0 1px 0 3px; display: flex; align-items: center; justify-content: space-between; font-size: 8px; line-height: 12px; font-weight: 600; }
.videos svg { width: 8px; height: 8px; margin-top: -5px; }
.units { padding: 4px 6px 6px 6px; }
.units h3 { padding-left: 3px; }
.units.basic h3 { padding-left: 2px; }
.units h4 { height: 15px; padding-left: 3px; font-size: 8px; line-height: 15px; font-weight: 600; }
.unitcols { display: grid; grid-template-columns: 1fr 1fr; column-gap: 12px; }
.basic .unitcols { column-gap: 11px; }
.unitlist { display: flex; flex-direction: column; gap: 3px; }
.unit { height: 25px; padding: 0 4px 0 3px; display: flex; align-items: center; border: 1px solid #4a525e; border-radius: 1px; }
.unit .who { flex: 1; min-width: 0; font-size: 6px; line-height: 10px; font-weight: 600; white-space: nowrap; }
.unit label { display: flex; align-items: center; gap: 4px; height: 9px; font-size: 5px; line-height: 8px; padding-left: 1px; }
.unit input { appearance: none; margin: 0; width: 21px; height: 7px; border-radius: 4px; background: linear-gradient(90deg, #eee 9px, #0070c0 10px); }
.rate { width: 30px; text-align: center; font-size: 4px; line-height: 5px; font-weight: 600; }
.rate b { display: block; font-size: 7px; line-height: 9px; font-weight: 600; }
.rate small { font-size: 4px; }
.round { width: 16px; height: 16px; flex: none; border: 1px solid #b8b8b8; border-radius: 50%; font-size: 4px; line-height: 6px; font-weight: 700; color: #fff; box-shadow: 1px 1px 1px #05090c; }
.round.g { background: #00b050; } .round.r { background: #f00000; } .round.k { background: #5c5c5c; }
.weather { height: 28px; padding: 0 6px 0 8px; display: flex; align-items: center; justify-content: space-between; white-space: nowrap; font-size: 11px; color: #e8eaee; }
.weather h3 { color: #fff; }
.weather b { font-weight: 600; color: #fff; }
.weather i { width: 1px; height: 22px; background: #151d28; }
.weather .arrow { font-size: 10px; color: #fff; }
.house { padding: 0 8px 7px 6px; }
.htitle { height: 27px; padding: 0 0 0 2px; display: flex; align-items: center; justify-content: space-between; }
.pill.comp { width: 75px; height: 16px; }
.houses { display: grid; grid-template-columns: 1fr 1fr; gap: 7px; }
.bname { height: 20px; margin-bottom: 5px; padding-left: 6px; background: #111a20; font-size: 9px; line-height: 18px; font-weight: 600; }
.cards { display: grid; grid-template-columns: 1fr 1fr 1fr; gap: 7px; }
.card { height: 76px; padding: 2px 4px 2px 6px; background: #111a20; font-size: 8px; line-height: 11px; font-weight: 600; display: flex; flex-direction: column; }
.card .top { height: 14px; display: flex; align-items: center; justify-content: space-between; }
.pill.trend { width: 37px; height: 12px; font-size: 5px; font-weight: 700; flex: none; }
.card .mid { flex: 1; display: flex; justify-content: space-between; align-items: center; }
.card .big { padding: 4px 0 0 1px; font-size: 26px; line-height: 32px; font-weight: 700; color: #e46c0a; }
.card .big.blue { color: #00b0f0; }
.card .unitname { display: block; font-size: 10px; line-height: 14px; }
.thermo { width: 20px; height: 52px; margin: 4px 4px 0 0; }
.drops { width: 32px; height: 42px; margin-top: 12px; }
.card.land { padding: 3px 2px 0 6px; flex-direction: row; justify-content: space-between; }
.card.land .l { display: flex; flex-direction: column; white-space: nowrap; }
.card.land .v { display: flex; align-items: baseline; justify-content: space-between; width: 54px; font-size: 16px; line-height: 17px; color: #e46c0a; }
.card.land .v.green { width: 64px; margin-left: -1px; color: #00b050; line-height: 16px; }
.card.land .v span { font-size: 7px; color: #fff; }
.card.land .co { line-height: 14px; padding-top: 2px; }
.card.land .rr { display: flex; flex-direction: column; align-items: center; width: 37px; flex: none; margin-left: -12px; }
.soil { width: 24px; height: 22px; margin-bottom: 5px; }
.co2 { position: relative; width: 26px; height: 22px; }
.cloud { display: block; width: 26px; height: 16px; }
.co2 span { position: absolute; left: 6px; top: 11px; font-size: 9px; line-height: 11px; color: #7a8086; text-shadow: 0 0 2px #111a20, 0 0 2px #111a20; }
.co2 sub { font-size: 6px; line-height: 6px; vertical-align: -1px; }
.lower { display: grid; grid-template-columns: minmax(0, 278fr) minmax(0, 366fr); gap: 8px; margin-top: -1px; }
.journal { padding: 4px 4px 1px 5px; display: flex; flex-direction: column; }
.journal h3 { padding: 0 0 12px 2px; box-sizing: content-box; }
.selection { flex: 1; position: relative; display: flex; }
.h { position: absolute; width: 11px; height: 11px; background: #0ff; border: 1px solid #000; }
.tl, .tc, .tr { top: -6px; } .bl, .bc, .br { bottom: -6px; }
.tl, .ml, .bl { left: -6px; } .tr, .mr, .br { right: -5px; }
.tc, .bc { left: calc(50% - 5px); } .ml, .mr { top: calc(50% - 5px); }
.alarms { position: relative; flex: 1; display: flex; flex-direction: column; background: #fff; border: 1px solid #828790; border-top: 0; color: #000; font: 12px/18px "Open Sans", "Noto Sans", sans-serif; }
.alarmbar { height: 28px; padding-left: 1px; display: flex; align-items: center; background: linear-gradient(#fff, #f0f0f2); border-bottom: 1px solid #828790; }
.alarmbar button { width: 23px; height: 22px; }
.alarmbar button:first-child { width: 19px; }
.alarmbar > i { width: 1px; height: 17px; background: #bdbdbd; margin: 0 3px; }
.alarmbar > i:first-of-type { margin: 0 2px 0 6px; }
.alarmbar select { appearance: none; width: 110px; height: 23px; padding: 0 3px; border: 1px solid #adadad; border-radius: 0; background-color: #e1e1e1; background-image: linear-gradient(45deg, transparent 42%, #555 42% 58%, transparent 58%), linear-gradient(-45deg, transparent 42%, #555 42% 58%, transparent 58%); background-position: right 8px center, right 4px center; background-size: 5px 5px; background-repeat: no-repeat; }
.alarmlist { border-collapse: collapse; table-layout: fixed; width: 100%; margin-bottom: auto; }
.alarmlist th { height: 26px; padding: 0 7px; text-align: left; font-weight: 400; border-right: 1px solid #e0e0e0; }
.alarmlist th:last-child { border: 0; }
.alarmlist .c1 { width: 121px; } .alarmlist .c2 { width: 60px; }
.hscroll { height: 15px; margin: 0 1px 2px; display: flex; background: #f0f0f0; }
.hscroll button { width: 16px; } .hscroll svg { width: 9px; height: 9px; }
.track { flex: 1; } .track i { display: block; width: 77%; height: 100%; background: #cdcdcd; }

/* properties */
.proptools { height: 32px; padding: 0 3px 0 1px; display: flex; align-items: center; }
.propgrid { flex: 1; min-height: 0; border: 1px solid #9a9cad; background: #fff; overflow: hidden; }
.propgrid table { width: 100%; border-collapse: collapse; table-layout: fixed; line-height: 17px; }
.gutter { width: 16px; } .name { width: 104px; }
.propgrid th, .propgrid td { height: 18px; padding: 0 3px; text-align: left; font-weight: 400; white-space: nowrap; overflow: hidden; }
.propgrid tr.tall > * { height: 19px; }
.propgrid .g { background: #f2f3f7; padding: 0; }
.propgrid .g + th { background: #f8f8fb; padding: 0 0 0 17px; border: 1px solid #dcdde3; position: relative; }
.propgrid td:last-child { border: 1px solid #dcdde3; border-right: 0; }
.propgrid .grp th { background: #f2f3f7; padding-left: 19px; }
.propgrid .grp svg { float: right; width: 8px; height: 5px; margin: 6px 2px 0 0; }
.propgrid b { font-weight: 700; }
.propgrid td .sw { display: inline-block; width: 22px; height: 11px; margin: 0 4px 0 2px; border: 1px solid #20203a; vertical-align: -1px; }
.exp { position: absolute; left: 5px; top: 5px; border: 4px solid transparent; border-left-color: #888a98; border-right: 0; }
.splitter { height: 5px; display: flex; justify-content: center; align-items: center; }
.splitter i { width: 14px; height: 2px; background: repeating-linear-gradient(90deg, #888a98 0 1px, transparent 1px 2px); }
.desc { height: 59px; border: 1px solid #b5b7c4; }

/* status bar */
.status { height: 28px; padding: 0 5px 0 8px; margin-top: 1px; display: flex; align-items: center; gap: 4px; border: 1px solid #aeb0bc; background: linear-gradient(#dadbe1, #c6c7ce); color: #38394e; }
.frame + .status { height: 27px; }
.status span:first-child { flex: 1; }
.status .sep { margin: 0 8px; }
.status label { padding-left: 2px; }
.status svg:not(.ico) { width: 14px; height: 14px; }
.status input { appearance: none; width: 151px; height: 18px; margin: 0 6px; background: linear-gradient(#9a9cad, #9a9cad) no-repeat center / 100% 1px; }
.status input::-webkit-slider-thumb { appearance: none; width: 10px; height: 16px; border: 1px solid #777c96; border-radius: 2px 2px 5px 5px; background: linear-gradient(#fff, #cdd6e8); }
.status .reset { margin-left: 5px; }
```
FILE: app.js
```js
const ico = (id, cls = 'ico') => `<svg class="${cls}"><use href="#${id}"/></svg>`;

/* toolbars: "|" is a separator, "*" marks a pressed tool, ":" adds a caption */
document.querySelectorAll('[data-tools]').forEach(bar => {
  bar.innerHTML = bar.dataset.tools.split(' ').map(t => {
    if (t === '|') return '<i class="sep"></i>';
    const [name, text] = t.split(':');
    const id = name.replace('*', '');
    const cls = 'tool' + (name.endsWith('*') ? ' pressed' : '') + (text ? ' labeled' : '');
    const pic = id === 'abl' ? '<span class="abl">abl</span>' : ico(id);
    return `<button class="${cls}" aria-label="${text || id}">${pic}${text || ''}</button>`;
  }).join('');
});

const rows = {
  gear: ['Ceiling_Left', 'Ceiling_Right', 'Left door_1', 'Left door_2', 'Right door_1', 'Right door_2'],
  basic: ['Hot-air blower', 'Floating fan_1', 'Floating fan_2', 'Ventilation fan_1', 'Ventilation fan_2',
    'Humidity controller_1', 'Humidity controller_2', 'Left watering', 'Right watering']
};
document.querySelectorAll('[data-rows]').forEach(list => {
  const kind = list.dataset.rows;
  list.innerHTML = rows[kind].map(name => `<div class="unit"><div class="who">${name}<label><input type="checkbox">Auto</label></div>` +
    (kind === 'gear'
      ? '<div class="rate">Opening<br>/closing rate<b>100 <small>%</small></b></div><button class="round g">Open</button><button class="round r">STOP</button><button class="round k">Close</button>'
      : '<button class="round g">RUN</button><button class="round r">STOP</button>') + '</div>').join('');
});

const trend = '<button class="pill trend">Trend chart</button>';
document.querySelectorAll('.building').forEach(b => {
  b.innerHTML = `<div class="bname">${b.dataset.name}</div><div class="cards">
    <div class="card"><div class="top">Temperature${trend}</div><div class="mid"><div><div class="big">25.0</div><span class="unitname">℃</span></div>${ico('thermo', 'thermo')}</div></div>
    <div class="card"><div class="top">Humidity${trend}</div><div class="mid"><div><div class="big blue">25.0</div><span class="unitname">%</span></div>${ico('drops', 'drops')}</div></div>
    <div class="card land"><div class="l"><span>Land<br>temperature</span><div class="v">25.0<span>℃</span></div><span class="co">CO2</span><div class="v green">025.0<span>${b.dataset.ppm}</span></div></div><div class="rr">${trend}${ico('soil', 'soil')}${trend}<div class="co2">${ico('cloud', 'cloud')}<span>CO<sub>2</sub></span></div></div></div>
  </div>`;
});

/* property grid */
const groups = [
  ['Alarm', [['AcknowledgeColor', 'Blue', '#0000ff'], ['AlarmColor', 'Red', '#ff0000'], ['Columns', ''], ['DisplayMode', 'Occurred'],
    ['Font', 'Malgun Gothic, ...'], ['LevelsSelected', ''], ['LevelsVisible', ''], ['NormalColor', 'Black', '#000000'],
    ['ShowHeader', 'True'], ['ShowToolbar', 'True'], ['SortColumn', 'Name'], ['SortMode', 'Ascending'], ['ZonesSelected', ''], ['ZonesVisible', '']]],
  ['General', [['Description', ' '], ['Name', 'alarmstatus_1']]],
  ['Layout', [['Height', '514'], ['Width', '714'], ['X', '1176'], ['Y', '544']]]
];
document.getElementById('props').innerHTML = groups.map(([g, items]) =>
  `<tr class="grp"><th colspan="3">${g}${ico('caret', '')}</th></tr>` + items.map(([k, v, c]) =>
    `<tr class="${g === 'Alarm' ? 'tall' : ''}"><td class="g"></td><th>${k === 'Font' ? '<i class="exp"></i>' : ''}${k}</th><td>` +
    (c ? `<span class="sw" style="background:${c}"></span>` : '') + (v ? `<b>${v}</b>` : '(Collection)') + '</td></tr>').join('')).join('');

/* page thumbnail */
const r = (x, y, w, h, f) => `<rect x="${x}" y="${y}" width="${w}" height="${h}" fill="${f}"/>`;
const t = (x, y, s, f, txt) => `<text x="${x}" y="${y}" font-size="${s}" font-weight="600" fill="${f}">${txt}</text>`;
let s = r(2, 2, 955, 43, '#283448') + r(298, 11, 365, 25, '#111a20') + t(404, 29, 14, '#fff', 'Smart farm grape farm') + t(815, 29, 13, '#ddd', '2021-02-05 12:36:21') +
  t(16, 31, 20, '#fff', '✖ XISOM');
[[10, 57, 278, 28], [10, 95, 278, 218], [10, 323, 278, 208], [298, 57, 652, 28], [298, 95, 652, 135], [298, 239, 278, 292], [584, 239, 366, 292]].forEach(p => s += r(...p, '#232e3f'));
[[16, 121], [154, 121], [16, 216], [154, 216]].forEach(p => s += r(...p, 130, 80, '#eee'));
s += r(235, 101, 23, 15, '#00b050') + r(260, 101, 23, 15, '#f00') + r(590, 273, 356, 256, '#eee');
[[137, 62, 53], [193, 62, 31], [226, 62, 30], [257, 62, 30], [60, 101, 66], [867, 101, 75]].forEach(([x, y, w]) =>
  s += `<rect x="${x}" y="${y}" width="${w}" height="16" rx="8" fill="#8a919c" stroke="#aaa" stroke-width="2"/>`);
s += t(14, 76, 13, '#fff', 'Automatic control') + t(305, 76, 13, '#fff', 'Weather information Nonsan   Temp. -3  ▲ 12  ▼ -5   Perceived temp. -6   Sunny   Precipitation 000') +
  t(19, 114, 13, '#fff', 'CCTV') + t(305, 114, 13, '#fff', 'House information') + t(19, 341, 13, '#fff', 'Switchgear motor') + t(305, 257, 13, '#fff', 'Basic control') + t(590, 257, 13, '#fff', 'Farming journal');
[304, 626].forEach(x => {
  s += r(x, 122, 316, 20, '#111a20');
  [0, 107, 215].forEach((d, i) => {
    s += r(x + d, 147, 101, 76, '#111a20') + r(x + d + 60, 151, 37, 12, '#667');
    s += i < 2 ? t(x + d + 6, 199, 27, i ? '#00b0f0' : '#e46c0a', '25.0') + r(x + d + 76, 170, 12, 46, '#444c54')
      : t(x + d + 6, 187, 17, '#e46c0a', '25.0') + t(x + d + 4, 220, 17, '#00b050', '025.0') + r(x + d + 70, 190, 26, 30, '#555d64');
  });
});
const unit = (x, y, gear) => `<rect x="${x}" y="${y}" width="127" height="25" fill="none" stroke="#7a828e" stroke-width="3"/>` +
  r(x + 5, y + 4, 34, 4, '#ccc') + r(x + 5, y + 14, 9, 7, '#fff') + r(x + 14, y + 14, 13, 7, '#0070c0') +
  r(x + (gear ? 76 : 90), y + 4, 16, 16, '#00b050') + r(x + (gear ? 92 : 106), y + 4, 16, 16, '#f00') + (gear ? r(x + 108, y + 4, 14, 16, '#666') : '');
for (let i = 0; i < 6; i++) s += unit(17, 360 + i * 28, true) + unit(156, 360 + i * 28, true);
for (let i = 0; i < 9; i++) s += unit(304, 276 + i * 28) + unit(442, 276 + i * 28);
document.getElementById('thumb').innerHTML = s;
```
